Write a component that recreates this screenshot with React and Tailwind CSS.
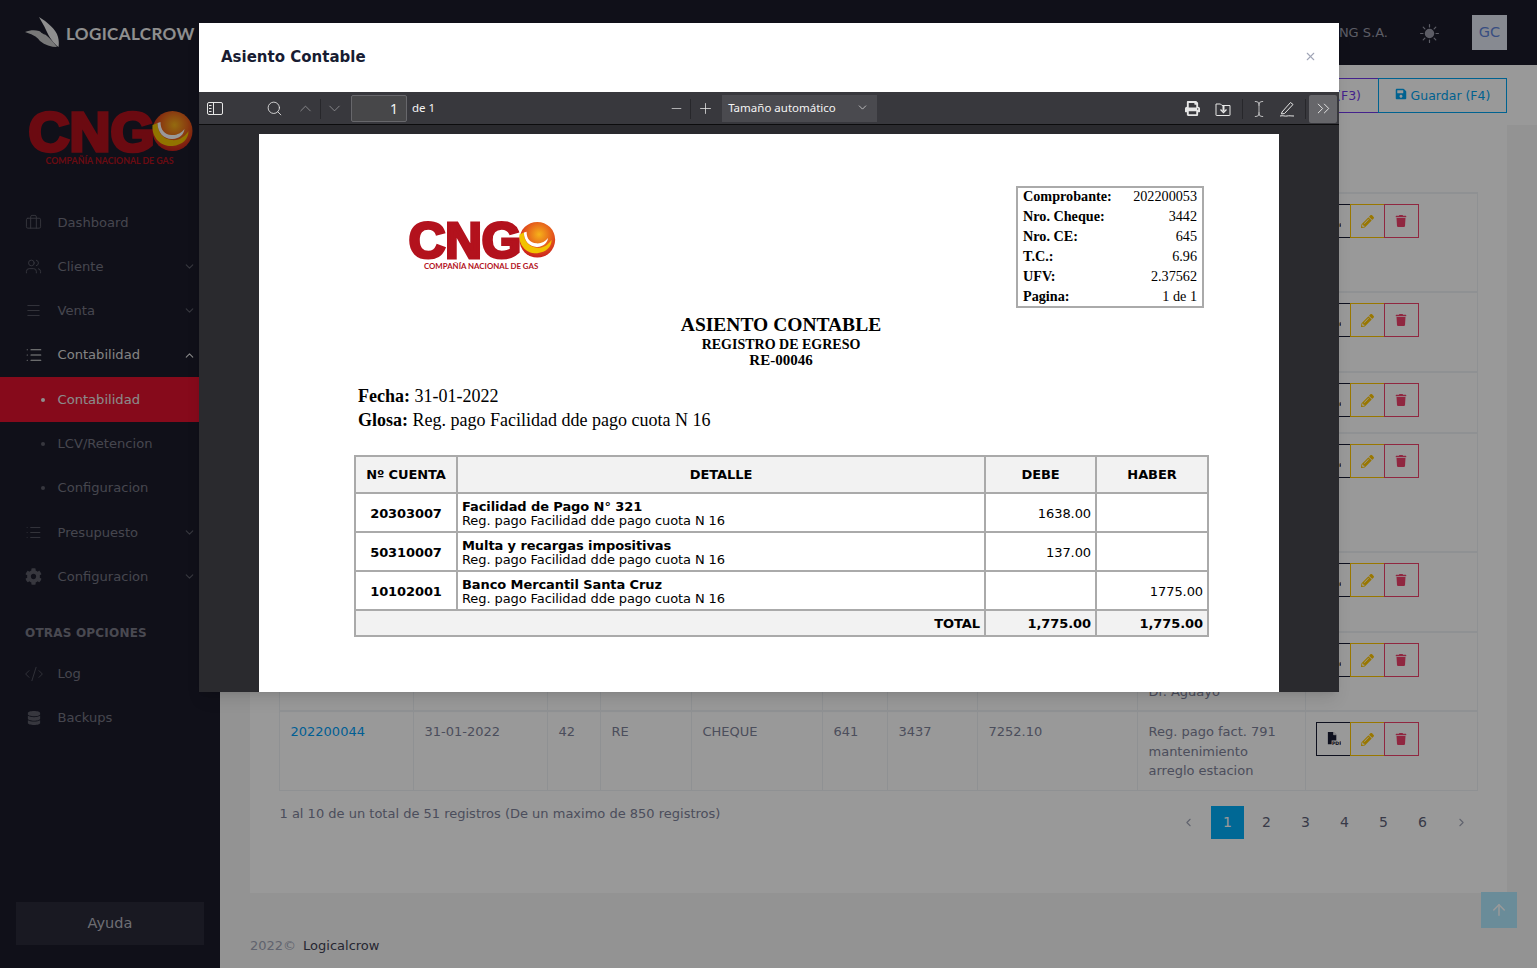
import { useState } from "react";
import {
  Briefcase,
  Users,
  Menu,
  List,
  ChevronDown,
  ChevronUp,
  ChevronLeft,
  ChevronRight,
  ChevronsRight,
  CodeXml,
  Search,
  Minus,
  Plus,
  TextCursor,
  ArrowUp,
  X,
} from "lucide-react";
import { FaCog, FaDatabase, FaSave, FaPencilAlt, FaTrash, FaPrint } from "react-icons/fa";
import { BsSunFill } from "react-icons/bs";

function CngoLogo({ className, idSuffix }) {
  return (
    <svg viewBox="0 0 165 56" className={className}>
      <defs>
        <radialGradient id={"sun" + idSuffix} cx="55%" cy="35%" r="70%">
          <stop offset="0%" stopColor="#f6b21a" />
          <stop offset="55%" stopColor="#e4571c" />
          <stop offset="100%" stopColor="#c4161c" />
        </radialGradient>
      </defs>
      <text
        x="1"
        y="41"
        textLength="126"
        lengthAdjust="spacingAndGlyphs"
        fontFamily="Liberation Sans, sans-serif"
        fontWeight="700"
        fontSize="56"
        fill="#b3121d"
        stroke="#b3121d"
        strokeWidth="3.6"
      >
        CNG
      </text>
      <circle cx="145" cy="21" r="20" fill={"url(#sun" + idSuffix + ")"} />
      <path d="M125 15 C124 30 136 37 145 36 C155 35 161 29 161 21 C157 27 151 31 144 30 C135 29 130 22 130 13 Z" fill="#f2c200" />
      <path d="M130 13 C130 23 137 29.500 145 29 C152 28.500 156 25 157 19 C154 23 149 25.500 144 25 C137 24.500 133 20 133 12 Z" fill="#ffffff" />
      <text
        x="18"
        y="54"
        textLength="128"
        lengthAdjust="spacingAndGlyphs"
        fontFamily="Lato, sans-serif"
        fontWeight="700"
        fontSize="9"
        fill="#b3121d"
      >
        COMPAÑÍA NACIONAL DE GAS
      </text>
    </svg>
  );
}

function CrowLogo() {
  return (
    <svg viewBox="0 0 36 32" className="h-[32px] w-[36px]" fill="#eeeeee">
      <path d="M14 0 C22 5 31 12 33 20 C34 24 34 27 33.500 30 C29 27 24 20 21 13 C19 8 16 4 14 0 Z" />
      <path d="M0 15 C5 13 10 13 14 14 C21 17 27 23 32 30 C26 30 20 28 15 24 C13 21 10 18 0 15 Z" fill="#c9c9c9" />
      <path d="M13 8 C15 11 18 15 20 18 L16 15.500 C15 13 13 10 13 8 Z" fill="#1b1c2b" />
    </svg>
  );
}

function NavItem({ icon, label, chevron, strong, dot, active }) {
  return (
    <div
      className={`flex h-[44.3px] items-center pl-[25px] pr-[24px] text-[13.1px] ${
        active ? "bg-[#df122e] text-[#e8e8e8]" : strong ? "text-[#dcdcdc]" : "text-[#767683]"
      }`}
    >
      <span className="flex w-[32.5px] shrink-0 items-center">
        {dot ? (
          <span className={`ml-[16px] h-[4px] w-[4px] rounded-full ${active ? "bg-[#eeeeee]" : "bg-[#5c5c68]"}`} />
        ) : (
          icon
        )}
      </span>
      <span className="flex-1">{label}</span>
      {chevron === "down" && <ChevronDown className="h-[13px] w-[13px] text-[#5c5c68]" />}
      {chevron === "up" && <ChevronUp className="h-[13px] w-[13px] text-[#e0e0e0]" />}
    </div>
  );
}

function Sidebar() {
  const ic = "h-[17px] w-[17px] text-[#5c5c68]";
  return (
    <aside className="flex h-[968px] w-[220px] shrink-0 flex-col bg-[#1b1c2b]">
      <div className="flex h-[65px] items-center pl-[25px]">
        <CrowLogo />
        <span className="ml-[5px] mt-[2px] font-['Lato'] text-[17px] font-bold tracking-[0.4px] text-[#eeeeee]">LOGICALCROW</span>
      </div>
      <div className="flex h-[135.2px] pl-[27px] pt-[45px]">
        <CngoLogo className="h-[56px] w-[166px]" idSuffix="a" />
      </div>
      <NavItem icon={<Briefcase className={ic} strokeWidth={1.3} />} label="Dashboard" />
      <NavItem icon={<Users className={ic} strokeWidth={1.3} />} label="Cliente" chevron="down" />
      <NavItem icon={<Menu className={ic} strokeWidth={1.3} />} label="Venta" chevron="down" />
      <NavItem icon={<List className="h-[18px] w-[18px] text-[#e4e4e4]" strokeWidth={1.5} />} label="Contabilidad" chevron="up" strong />
      <NavItem dot active label="Contabilidad" />
      <NavItem dot label="LCV/Retencion" />
      <NavItem dot label="Configuracion" />
      <NavItem icon={<List className={ic} strokeWidth={1.3} />} label="Presupuesto" chevron="down" />
      <NavItem icon={<FaCog className={ic} />} label="Configuracion" chevron="down" />
      <div className="mt-[22.8px] pl-[25px] text-[12px] font-bold leading-[22px] tracking-[0.2px] text-[#7b7b87]">OTRAS OPCIONES</div>
      <div className="mt-[8px]">
        <NavItem icon={<CodeXml className="-ml-px h-[20px] w-[20px] text-[#5c5c68]" strokeWidth={1} />} label="Log" />
        <NavItem icon={<FaDatabase className="ml-[2px] h-[14px] w-[14px] text-[#5c5c68]" />} label="Backups" />
      </div>
      <div className="mx-[16px] mb-[23px] mt-auto flex h-[43px] items-center justify-center bg-[#2a2b3a] text-[14.5px] text-[#b8b8c0]">Ayuda</div>
    </aside>
  );
}

const rows = [
  { h: "h-[99px]", nro: "202200053", fecha: "31-01-2022", ce: "645", tipo: "RE", pago: "CHEQUE", doc: "645", cheque: "3442", monto: "1775.00", glosa: ["Reg. pago Facilidad", "dde pago cuota N 16"] },
  { h: "h-[80px]", nro: "202200052", fecha: "31-01-2022", ce: "644", tipo: "RE", pago: "CHEQUE", doc: "644", cheque: "3441", monto: "350.00", glosa: ["Reg. pago fact. 801"] },
  { h: "h-[61px]", nro: "202200051", fecha: "31-01-2022", ce: "643", tipo: "RE", pago: "CHEQUE", doc: "643", cheque: "3440", monto: "512.00", glosa: ["Reg. pago"] },
  { h: "h-[119px]", nro: "202200050", fecha: "31-01-2022", ce: "46", tipo: "RE", pago: "CHEQUE", doc: "642", cheque: "3439", monto: "2400.00", glosa: ["Reg. pago fact. 795"] },
  { h: "h-[80px]", nro: "202200049", fecha: "31-01-2022", ce: "45", tipo: "RE", pago: "CHEQUE", doc: "642", cheque: "3438", monto: "960.00", glosa: ["Reg. pago"] },
  { h: "h-[79px]", nro: "202200045", fecha: "31-01-2022", ce: "43", tipo: "RE", pago: "CHEQUE", doc: "641", cheque: "3438", monto: "880.00", glosa: ["Reg. pago honorarios", "profesionales", "Dr. Aguayo"] },
  { h: "h-[79px]", nro: "202200044", fecha: "31-01-2022", ce: "42", tipo: "RE", pago: "CHEQUE", doc: "641", cheque: "3437", monto: "7252.10", glosa: ["Reg. pago fact. 791", "mantenimiento", "arreglo estacion"] },
];

function PdfIcon() {
  return (
    <svg viewBox="0 0 16 16" className="h-[15px] w-[15px]">
      <path d="M2 0 H8 L11 3 V13 H2 Z" fill="#181c32" />
      <path d="M8 0 V3 H11" fill="#ffffff" stroke="#ffffff" strokeWidth="0.5" />
      <rect x="6" y="9" width="10" height="6" fill="#ffffff" />
      <text x="6.300" y="14" fontSize="5" fontWeight="700" fontFamily="DejaVu Sans, sans-serif" fill="#181c32">PDF</text>
    </svg>
  );
}

function ActionButtons() {
  const base = "-ml-px flex h-[34px] w-[35px] items-center justify-center border";
  return (
    <div className="ml-[10px] mt-[10px] flex">
      <span className={`${base} ml-0 border-[#181c32]`}><PdfIcon /></span>
      <span className={`${base} border-[#ffc700] text-[#ffc700]`}><FaPencilAlt className="h-[13px] w-[13px]" /></span>
      <span className={`${base} border-[#f1416c] text-[#f1416c]`}><FaTrash className="h-[12px] w-[12px]" /></span>
    </div>
  );
}

function RecordsTable() {
  const td = "border border-[#eff2f5] border-t-2 px-[11px] pt-[10px] align-top";
  return (
    <table className="w-[1198px] table-fixed border-collapse text-[13px] leading-[19.5px] text-[#7e8299]">
      <colgroup>
        <col className="w-[134px]" />
        <col className="w-[134px]" />
        <col className="w-[53px]" />
        <col className="w-[91px]" />
        <col className="w-[131px]" />
        <col className="w-[65px]" />
        <col className="w-[90px]" />
        <col className="w-[160px]" />
        <col className="w-[168px]" />
        <col className="w-[172px]" />
      </colgroup>
      <tbody>
        {rows.map((r) => (
          <tr key={r.nro} className={r.h}>
            <td className={`${td} text-[#009ef7]`}>{r.nro}</td>
            <td className={td}>{r.fecha}</td>
            <td className={td}>{r.ce}</td>
            <td className={td}>{r.tipo}</td>
            <td className={td}>{r.pago}</td>
            <td className={td}>{r.doc}</td>
            <td className={td}>{r.cheque}</td>
            <td className={td}>{r.monto}</td>
            <td className={td}>
              {r.glosa.map((g) => (
                <div key={g}>{g}</div>
              ))}
            </td>
            <td className="border border-[#eff2f5] border-t-2 p-0 align-top"><ActionButtons /></td>
          </tr>
        ))}
      </tbody>
    </table>
  );
}

function Pager() {
  const [page] = useState(1);
  return (
    <div className="flex items-center gap-[6px] text-[14px] text-[#5e6278]">
      <span className="flex h-[33px] w-[33px] items-center justify-center text-[#a1a5b7]"><ChevronLeft className="h-[13px] w-[13px]" /></span>
      {[1, 2, 3, 4, 5, 6].map((n) => (
        <span
          key={n}
          className={`flex h-[33px] w-[33px] items-center justify-center ${n === page ? "bg-[#00aef8] text-white" : ""}`}
        >
          {n}
        </span>
      ))}
      <span className="flex h-[33px] w-[33px] items-center justify-center text-[#a1a5b7]"><ChevronRight className="h-[13px] w-[13px]" /></span>
    </div>
  );
}

function Main() {
  return (
    <main className="flex min-w-0 flex-1 flex-col bg-[#f5f5f5]">
      <header className="flex h-[65px] items-center justify-end bg-[#1b1c2b] pr-[30px]">
        <span className="text-[13px] text-[#9a9aa8]">COMPAÑIA NACIONAL DE GAS CNG S.A.</span>
        <BsSunFill className="ml-[32px] mt-[1px] h-[19px] w-[19px] text-[#9a9aa8]" />
        <span className="ml-[33px] flex h-[35px] w-[35px] items-center justify-center bg-[#e1e6f2] text-[14.5px] text-[#5e82d8]">GC</span>
      </header>
      <div className="flex h-[60px] items-center justify-end bg-white pr-[30px] text-[12.5px]">
        <span className="flex h-[35px] w-[130px] items-center justify-end border border-[#7239ea] pr-[17px] pt-[2px] text-[#7239ea]">Nuevo (F3)</span>
        <span className="-ml-px flex h-[35px] w-[129px] items-center justify-center gap-[4px] border border-[#00a3f0] pt-[2px] text-[#00a3f0]">
          <FaSave className="mb-[5px] h-[12px] w-[12px]" />
          Guardar (F4)
        </span>
      </div>
      <section className="ml-[30px] mr-[30px] h-[768px] shrink-0 bg-white pl-[28.5px]">
        <div className="h-[67px]" />
        <RecordsTable />
        <div className="mt-[15px] flex items-start justify-between pr-[29px]">
          <span className="-mt-[2px] ml-[1px] text-[13px] leading-[19.5px] text-[#7e8299]">1 al 10 de un total de 51 registros (De un maximo de 850 registros)</span>
          <Pager />
        </div>
      </section>
      <footer className="ml-[30px] mt-[43px] text-[13px] leading-[20px]">
        <span className="text-[#a1a5b7]">2022©</span>
        <span className="ml-[7px] text-[#3f4254]">Logicalcrow</span>
      </footer>
    </main>
  );
}

function SidebarToggleIcon() {
  return (
    <svg viewBox="0 0 16 13" className="h-[13px] w-[16px]" fill="none" stroke="#e6e6e6" strokeWidth="1">
      <rect x="0.500" y="0.500" width="15" height="12" rx="1.500" />
      <path d="M6.500 0.500 V12.500 M2 3.500 H4.500 M2 6.500 H4.500 M2 9.500 H4.500" />
    </svg>
  );
}

function SaveFolderIcon() {
  return (
    <svg viewBox="0 0 16 16" className="h-[16px] w-[16px]" fill="none" stroke="#e6e6e6" strokeWidth="1">
      <path d="M1 3 H5.500 L7 4.500 H15 V14 A0.500 0.500 0 0 1 14.500 14.500 H1.500 A0.500 0.500 0 0 1 1 14 Z" />
      <path d="M8.500 4.500 V10" strokeWidth="2" />
      <path d="M5.500 8.500 L8.500 11.500 L11.500 8.500" strokeWidth="1.400" />
    </svg>
  );
}

function DrawIcon() {
  return (
    <svg viewBox="0 0 16 16" className="h-[16px] w-[16px]" fill="none" stroke="#e6e6e6" strokeWidth="1">
      <path d="M3 11 L11.500 1.500 L14 3.500 L5.500 12.500 L2.500 13 Z" />
      <path d="M1 15 C4 14.200 6 15.500 8 15 C10 14.500 12 15 15 15" />
    </svg>
  );
}

function PdfToolbar() {
  const icon = "text-[#e6e6e6]";
  return (
    <div className="flex h-[33px] shrink-0 items-center border-b border-[#0c0c0d] bg-[#38383d] pt-px font-['Noto_Sans'] text-[11.5px] text-[#f4f4f4]">
      <span className="ml-[8px] flex w-[16px]"><SidebarToggleIcon /></span>
      <Search className={`ml-[43px] h-[17px] w-[17px] ${icon}`} strokeWidth={1.2} />
      <ChevronUp className="ml-[13px] h-[19px] w-[19px] text-[#9a9a9d]" strokeWidth={1} />
      <span className="ml-[5px] h-[20px] w-px bg-[#27272b]" />
      <ChevronDown className="ml-[4px] h-[19px] w-[19px] text-[#9a9a9d]" strokeWidth={1} />
      <span className="ml-[7px] flex h-[27px] w-[56px] items-center justify-end rounded-[2px] border border-[#67676b] bg-[#474749] pr-[8px] text-[14px]">1</span>
      <span className="-mt-[2px] ml-[5px]">de 1</span>
      <Minus className={`ml-[234px] h-[15px] w-[15px] ${icon}`} strokeWidth={1.1} />
      <span className="ml-[6px] h-[20px] w-px bg-[#27272b]" />
      <Plus className={`ml-[6px] h-[17px] w-[17px] ${icon}`} strokeWidth={1.1} />
      <span className="ml-[8px] flex h-[27px] w-[155px] items-center justify-between bg-[#4a4a4f] pb-[2px] pl-[6px] pr-[8px]">
        Tamaño automático
        <ChevronDown className="h-[13px] w-[13px]" strokeWidth={1.2} />
      </span>
      <span className="ml-auto flex items-center">
        <FaPrint className={`h-[15px] w-[15px] ${icon}`} />
        <span className="ml-[15px]"><SaveFolderIcon /></span>
        <span className="ml-[11px] h-[20px] w-px bg-[#27272b]" />
        <TextCursor className={`ml-[7px] h-[18px] w-[18px] ${icon}`} strokeWidth={1} />
        <span className="ml-[11px]"><DrawIcon /></span>
        <span className="ml-[10px] h-[20px] w-px bg-[#27272b]" />
        <span className="ml-[3px] mr-[2px] flex h-[28px] w-[28px] items-center justify-center rounded-[2px] bg-[#66666a]">
          <ChevronsRight className={`h-[21px] w-[21px] ${icon}`} strokeWidth={1.1} />
        </span>
      </span>
    </div>
  );
}

const summary = [
  ["Comprobante:", "202200053"],
  ["Nro. Cheque:", "3442"],
  ["Nro. CE:", "645"],
  ["T.C.:", "6.96"],
  ["UFV:", "2.37562"],
  ["Pagina:", "1 de 1"],
];

const entries = [
  { cuenta: "20303007", name: "Facilidad de Pago N° 321", debe: "1638.00", haber: "" },
  { cuenta: "50310007", name: "Multa y recargas impositivas", debe: "137.00", haber: "" },
  { cuenta: "10102001", name: "Banco Mercantil Santa Cruz", debe: "", haber: "1775.00" },
];

function AsientoPage() {
  const cell = "border-2 border-[#aaaaaa]";
  return (
    <div className="mx-auto mt-[9px] w-[1020px] shrink-0 bg-white pb-[60px] pl-[95px] pr-[71px] pt-[52px] text-black">
      <div className="flex items-start justify-between pr-[4px]">
        <CngoLogo className="ml-[52px] mt-[35px] h-[50px] w-[151px]" idSuffix="b" />
        <div className="h-[122px] w-[188px] border-2 border-[#aaaaaa] px-[5px] font-['Liberation_Serif'] text-[14.2px] leading-[20px]">
          <div className="-mt-[2px]">
            {summary.map(([k, v]) => (
              <div key={k} className="flex justify-between">
                <b>{k}</b>
                <span>{v}</span>
              </div>
            ))}
          </div>
        </div>
      </div>
      <div className="mt-[6px] text-center font-['Liberation_Serif'] font-bold">
        <div className="text-[19.5px] leading-[22px]">ASIENTO CONTABLE</div>
        <div className="mt-[1px] text-[14px] leading-[15px]">REGISTRO DE EGRESO</div>
        <div className="text-[15px] leading-[16px]">RE-00046</div>
      </div>
      <div className="mt-[16px] pl-[4px] font-['Liberation_Serif'] text-[18px] leading-[24px]">
        <div><b>Fecha:</b> 31-01-2022</div>
        <div><b>Glosa:</b> Reg. pago Facilidad dde pago cuota N 16</div>
      </div>
      <table className="mt-[23px] w-[853px] table-fixed border-collapse font-['DejaVu_Sans'] text-[13px] leading-[14px] tracking-[-0.09px]">
        <colgroup>
          <col className="w-[102px]" />
          <col className="w-[528px]" />
          <col className="w-[111px]" />
          <col className="w-[112px]" />
        </colgroup>
        <thead>
          <tr className="h-[37px] bg-[#f2f2f2] font-bold">
            <td className={`${cell} text-center`}>Nº CUENTA</td>
            <td className={`${cell} text-center`}>DETALLE</td>
            <td className={`${cell} text-center`}>DEBE</td>
            <td className={`${cell} text-center`}>HABER</td>
          </tr>
        </thead>
        <tbody>
          {entries.map((e) => (
            <tr key={e.cuenta} className="h-[39px]">
              <td className={`${cell} pt-[2px] text-center font-bold`}>{e.cuenta}</td>
              <td className={`${cell} px-[4px] pt-[2px]`}>
                <div className="font-bold">{e.name}</div>
                <div>Reg. pago Facilidad dde pago cuota N 16</div>
              </td>
              <td className={`${cell} px-[4px] pt-[2px] text-right`}>{e.debe}</td>
              <td className={`${cell} px-[4px] pt-[2px] text-right`}>{e.haber}</td>
            </tr>
          ))}
          <tr className="h-[26px] bg-[#f2f2f2] font-bold">
            <td colSpan={2} className={`${cell} px-[4px] pt-[2px] text-right`}>TOTAL</td>
            <td className={`${cell} px-[4px] pt-[2px] text-right`}>1,775.00</td>
            <td className={`${cell} px-[4px] pt-[2px] text-right`}>1,775.00</td>
          </tr>
        </tbody>
      </table>
    </div>
  );
}

function AsientoModal() {
  return (
    <div className="absolute left-[199px] top-[23px] flex h-[669px] w-[1140px] flex-col overflow-hidden bg-white font-['DejaVu_Sans'] shadow-lg">
      <div className="flex h-[69px] shrink-0 items-center justify-between pl-[22px] pr-[22px]">
        <h5 className="-mt-[1px] text-[15px] font-bold text-[#181c32]">Asiento Contable</h5>
        <X className="-mt-[3px] h-[13px] w-[13px] text-[#a1a5b7]" strokeWidth={2} />
      </div>
      <PdfToolbar />
      <div className="flex min-h-0 flex-1 flex-col overflow-hidden bg-[#2a2a2e]">
        <AsientoPage />
      </div>
    </div>
  );
}

export default function App() {
  return (
    <div className="relative flex h-[968px] overflow-hidden font-['DejaVu_Sans']">
      <Sidebar />
      <Main />
      <span className="absolute left-[1481px] top-[892px] flex h-[36px] w-[36px] items-center justify-center bg-[#b1e9ff] text-white">
        <ArrowUp className="h-[18px] w-[18px]" strokeWidth={2} />
      </span>
      <div className="absolute inset-0 bg-black/40" />
      <AsientoModal />
    </div>
  );
}
